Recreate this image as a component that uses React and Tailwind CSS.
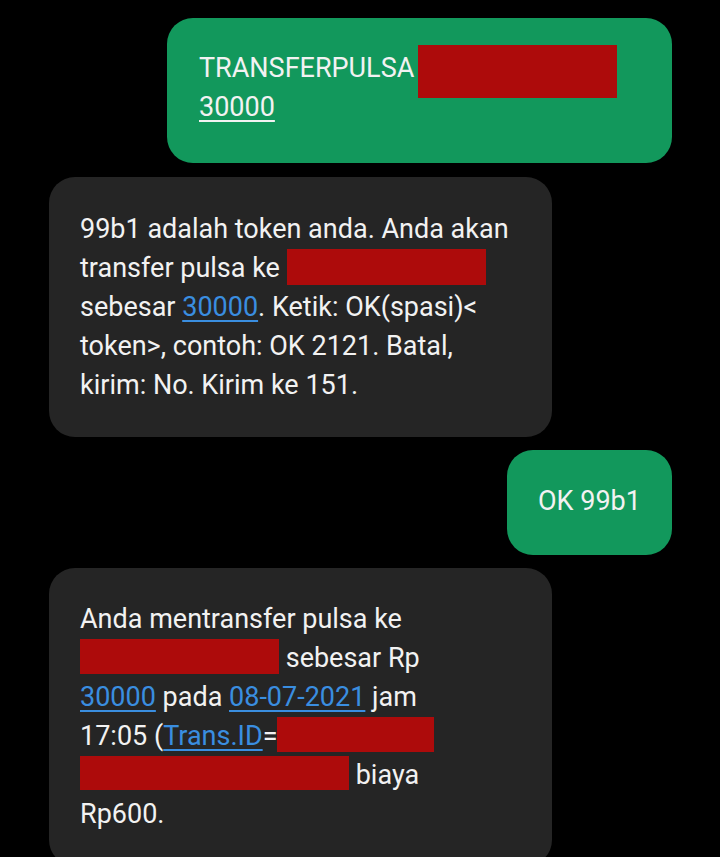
import React from "react";

const Red = ({ w, h = 36 }) => (
  <span
    className="inline-block align-top bg-[#ad0b0b]"
    style={{ width: w, height: h }}
  />
);

const Link = ({ children }) => (
  <span className="text-[#3a8ee0] underline decoration-[1.5px] underline-offset-[4px]">
    {children}
  </span>
);

export default function App() {
  return (
    <div
      className="min-h-[857px] bg-black pt-[18px] flex flex-col text-[27px] leading-[39px] text-[#f2f2f2] overflow-hidden"
      style={{ fontFamily: "Roboto, 'Noto Sans', sans-serif" }}
    >
      {/* Bubble 1 */}
      <div className="self-end mr-[48px] w-[505px] h-[145px] rounded-[26px] bg-[#12985c] pl-[32px] pt-[31px]">
        <div className="whitespace-nowrap">
          TRANSFERPULSA
          <span className="relative inline-block align-top ml-[4px] w-[199px] h-[39px]">
            <span className="absolute left-0 top-[-4px] w-[199px] h-[53px] bg-[#ad0b0b]" />
          </span>
        </div>
        <div className="whitespace-nowrap">
          <span className="underline decoration-[1.5px] underline-offset-[4px]">30000</span>
        </div>
      </div>

      {/* Bubble 2 */}
      <div className="mt-[14px] ml-[49px] w-[503px] rounded-[26px] bg-[#252525] pl-[31px] pt-[33px] pb-[32px]">
        <div className="whitespace-nowrap">99b1 adalah token anda. Anda akan</div>
        <div className="whitespace-nowrap">
          transfer pulsa ke <Red w={199} h={36} />
        </div>
        <div className="whitespace-nowrap">
          sebesar <Link>30000</Link>. Ketik: OK(spasi)&lt;
        </div>
        <div className="whitespace-nowrap">token&gt;, contoh: OK 2121. Batal,</div>
        <div className="whitespace-nowrap">kirim: No. Kirim ke 151.</div>
      </div>

      {/* Bubble 3 */}
      <div className="mt-[13px] self-end mr-[48px] w-[165px] h-[105px] rounded-[26px] bg-[#12985c] pl-[31px] pt-[32px]">
        <div className="whitespace-nowrap">OK 99b1</div>
      </div>

      {/* Bubble 4 */}
      <div className="mt-[13px] ml-[49px] w-[503px] rounded-[26px] bg-[#252525] pl-[31px] pt-[32px] pb-[32px]">
        <div className="whitespace-nowrap">Anda mentransfer pulsa ke</div>
        <div className="whitespace-nowrap">
          <Red w={199} h={35} /> sebesar Rp
        </div>
        <div className="whitespace-nowrap">
          <Link>30000</Link> pada <Link>08-07-2021</Link> jam
        </div>
        <div className="whitespace-nowrap">
          17:05 (<Link>Trans.ID</Link>=<Red w={157} h={35} />
        </div>
        <div className="whitespace-nowrap">
          <Red w={269} h={34} /> biaya
        </div>
        <div className="whitespace-nowrap">Rp600.</div>
      </div>
    </div>
  );
}
